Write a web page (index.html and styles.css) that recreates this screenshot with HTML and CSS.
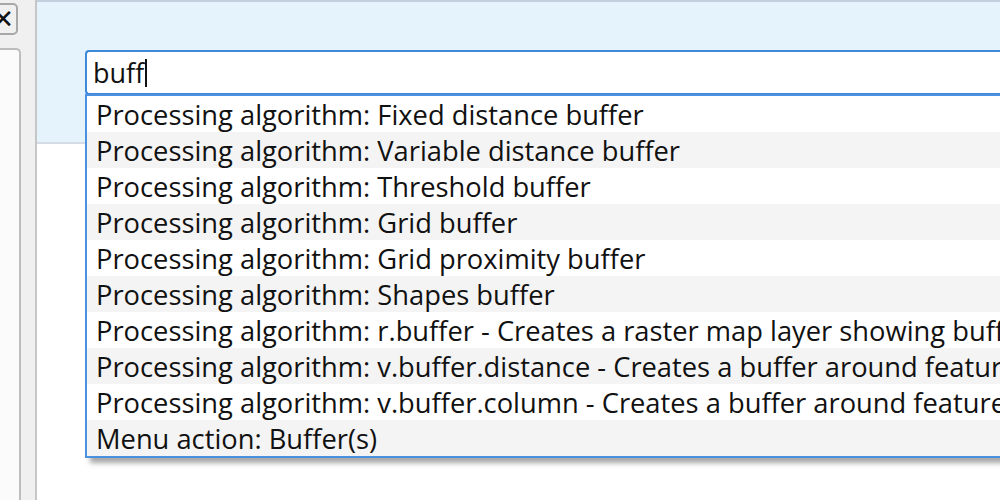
FILE: index.html
```html
<!DOCTYPE html>
<html>
<head>
<meta charset="utf-8">
<link rel="stylesheet" href="styles.css">
</head>
<body>
<div class="sidebar">
  <div class="close-btn"><span class="x">✕</span></div>
  <div class="panel"></div>
</div>
<div class="main">
  <div class="header">
    <div class="search"><span class="query">buff</span><span class="caret"></span></div>
  </div>
  <div class="body-area"></div>
  <ul class="popup">
    <li class="row">Processing algorithm: Fixed distance buffer</li>
    <li class="row alt">Processing algorithm: Variable distance buffer</li>
    <li class="row">Processing algorithm: Threshold buffer</li>
    <li class="row alt">Processing algorithm: Grid buffer</li>
    <li class="row">Processing algorithm: Grid proximity buffer</li>
    <li class="row alt">Processing algorithm: Shapes buffer</li>
    <li class="row">Processing algorithm: r.buffer - Creates a raster map layer showing buffe</li>
    <li class="row alt">Processing algorithm: v.buffer.distance - Creates a buffer around feature</li>
    <li class="row">Processing algorithm: v.buffer.column - Creates a buffer around feature</li>
    <li class="row alt">Menu action: Buffer(s)</li>
  </ul>
</div>
</body>
</html>
```
FILE: styles.css
```css
html, body {
  margin: 0;
  padding: 0;
}
body {
  width: 1000px;
  height: 500px;
  overflow: hidden;
  display: flex;
  background: #ffffff;
  font-family: "Open Sans", "Noto Sans", sans-serif;
  color: #111111;
}
.sidebar {
  width: 35px;
  flex: none;
  background: #f0f0f0;
  display: flex;
  flex-direction: column;
}
.close-btn {
  margin: 3px 0 0 -4px;
  width: 18px;
  height: 28px;
  border: 2px solid #a8a8a8;
  border-radius: 5px;
  background: #f0f0f0;
  display: flex;
  align-items: center;
  justify-content: flex-end;
  overflow: hidden;
}
.x {
  font-size: 26px;
  font-weight: bold;
  line-height: 1;
  color: #111;
  margin-right: 2px;
  font-family: "DejaVu Sans", sans-serif;
}
.panel {
  margin: 13px 0 0 -4px;
  width: 21px;
  flex: 1;
  border: 2px solid #bdbdbd;
  border-radius: 5px 5px 0 0;
  border-bottom: none;
  background: #fbfbfb;
}
.main {
  flex: 1;
  position: relative;
  border-left: 2px solid #c6c6c6;
  display: flex;
  flex-direction: column;
}
.header {
  background: #e5f3fd;
  border-top: 2px solid #c3cfdc;
  border-bottom: 2px solid #d4dbe2;
  padding: 48px 0 0 48px;
  box-sizing: border-box;
  height: 144px;
}
.search {
  height: 45px;
  box-sizing: border-box;
  border: 2px solid #3f8ad8;
  border-radius: 4px 0 0 4px;
  border-right: none;
  background: #fff;
  display: flex;
  align-items: center;
  padding-left: 6px;
  font-size: 27px;
}
.caret {
  width: 2px;
  height: 28px;
  background: #111;
  margin-left: 1px;
}
.body-area {
  flex: 1;
}
.popup {
  position: absolute;
  left: 48px;
  top: 94px;
  width: 1000px;
  margin: 0;
  padding: 0;
  list-style: none;
  border: 2px solid #4a91e0;
  background: #fff;
  box-shadow: 5px 5px 5px rgba(0, 0, 0, 0.35);
}
.row {
  height: 36px;
  line-height: 37px;
  padding-left: 9px;
  font-size: 27.3px;
  white-space: nowrap;
  overflow: hidden;
}
.row.alt {
  background: #f4f4f4;
}
```
